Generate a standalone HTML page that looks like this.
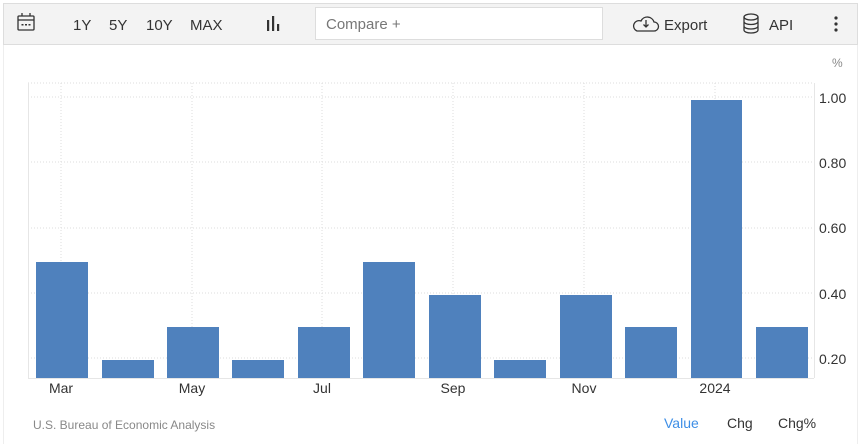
<!DOCTYPE html>
<html><head><style>
body{margin:0;width:859px;height:444px;background:#fff;font-family:"Liberation Sans",sans-serif;overflow:hidden;position:relative}
.tb{position:absolute;left:3px;top:3px;width:853px;height:40px;background:#f3f3f3;border:1px solid #ddd}
.t{position:absolute;font-size:15px;color:#333;top:15px}
.frame{position:absolute;left:3px;top:44px;width:853px;height:400px;border-left:1px solid #eee;border-right:1px solid #eee}
</style></head><body>
<div class="frame"></div>
<div class="tb"></div>
<svg style="position:absolute;left:0;top:0" width="859" height="444">
<g fill="none" stroke="#333" stroke-width="1.3">
<rect x="18" y="16" width="16" height="14" rx="1"/><line x1="18" y1="20" x2="34" y2="20"/><line x1="22" y1="13" x2="22" y2="16"/><line x1="30" y1="13" x2="30" y2="16"/>
</g>
<g fill="#333"><rect x="21.5" y="24" width="2" height="1.5"/><rect x="25" y="24" width="2" height="1.5"/><rect x="28.5" y="24" width="2" height="1.5"/>
<rect x="267" y="20" width="2.2" height="11"/><rect x="272" y="16" width="2.2" height="15"/><rect x="277" y="24" width="2.2" height="7"/>
<circle cx="836" cy="18" r="1.6"/><circle cx="836" cy="24" r="1.6"/><circle cx="836" cy="30" r="1.6"/></g>
<g fill="none" stroke="#333" stroke-width="1.3">
<path d="M637 31 h17 a4.5 4.5 0 0 0 0-9 a7 7 0 0 0-13-1 a5 5 0 0 0-4 10z"/>
<path d="M646 20v7m-2.5-2.5 2.5 2.5 2.5-2.5"/>
<ellipse cx="751" cy="17" rx="7" ry="3"/><path d="M744 17v13c0 4 14 4 14 0V17M744 21.5c0 4 14 4 14 0M744 26c0 4 14 4 14 0"/>
</g>
<rect x="315.5" y="7.5" width="287" height="32" fill="#fff" stroke="#ddd"/>
<text x="326" y="29" font-size="15" fill="#777">Compare +</text>
<g font-size="15" fill="#333"><text x="73" y="30">1Y</text><text x="109" y="30">5Y</text><text x="146" y="30">10Y</text><text x="190" y="30">MAX</text><text x="664" y="30">Export</text><text x="769" y="30">API</text></g>
<g stroke="#ddd" stroke-dasharray="1,2" stroke-width="1">
<line x1="28" y1="83" x2="814" y2="83"/><line x1="28" y1="97" x2="814" y2="97"/><line x1="28" y1="162" x2="814" y2="162"/><line x1="28" y1="228" x2="814" y2="228"/><line x1="28" y1="293" x2="814" y2="293"/><line x1="28" y1="358" x2="814" y2="358"/>
<line x1="61" y1="83" x2="61" y2="378"/><line x1="192" y1="83" x2="192" y2="378"/><line x1="322" y1="83" x2="322" y2="378"/><line x1="453" y1="83" x2="453" y2="378"/><line x1="584" y1="83" x2="584" y2="378"/><line x1="715" y1="83" x2="715" y2="378"/>
</g>
<line x1="28.5" y1="83" x2="28.5" y2="378" stroke="#e6e6e6"/>
<line x1="814.5" y1="83" x2="814.5" y2="378" stroke="#e6e6e6"/>
<line x1="28" y1="378.5" x2="814" y2="378.5" stroke="#e6e6e6"/>
<g fill="#4f81bd">
<rect x="36" y="262" width="52" height="116"/><rect x="102" y="360" width="52" height="18"/><rect x="167" y="327" width="52" height="51"/><rect x="232" y="360" width="52" height="18"/><rect x="298" y="327" width="52" height="51"/><rect x="363" y="262" width="52" height="116"/><rect x="429" y="295" width="52" height="83"/><rect x="494" y="360" width="52" height="18"/><rect x="560" y="295" width="52" height="83"/><rect x="625" y="327" width="52" height="51"/><rect x="691" y="100" width="51" height="278"/><rect x="756" y="327" width="52" height="51"/>
</g>
<g font-size="14" fill="#333"><text x="819" y="103">1.00</text><text x="819" y="168">0.80</text><text x="819" y="233">0.60</text><text x="819" y="299">0.40</text><text x="819" y="364">0.20</text>
<text x="61" y="393" text-anchor="middle">Mar</text><text x="192" y="393" text-anchor="middle">May</text><text x="322" y="393" text-anchor="middle">Jul</text><text x="453" y="393" text-anchor="middle">Sep</text><text x="584" y="393" text-anchor="middle">Nov</text><text x="715" y="393" text-anchor="middle">2024</text></g>
<text x="832" y="67" font-size="12" fill="#888">%</text>
<text x="33" y="429" font-size="12" fill="#888">U.S. Bureau of Economic Analysis</text>
<g font-size="14"><text x="664" y="428" fill="#3d8ee6">Value</text><text x="727" y="428" fill="#333">Chg</text><text x="778" y="428" fill="#333">Chg%</text></g>
</svg>
</body></html>
